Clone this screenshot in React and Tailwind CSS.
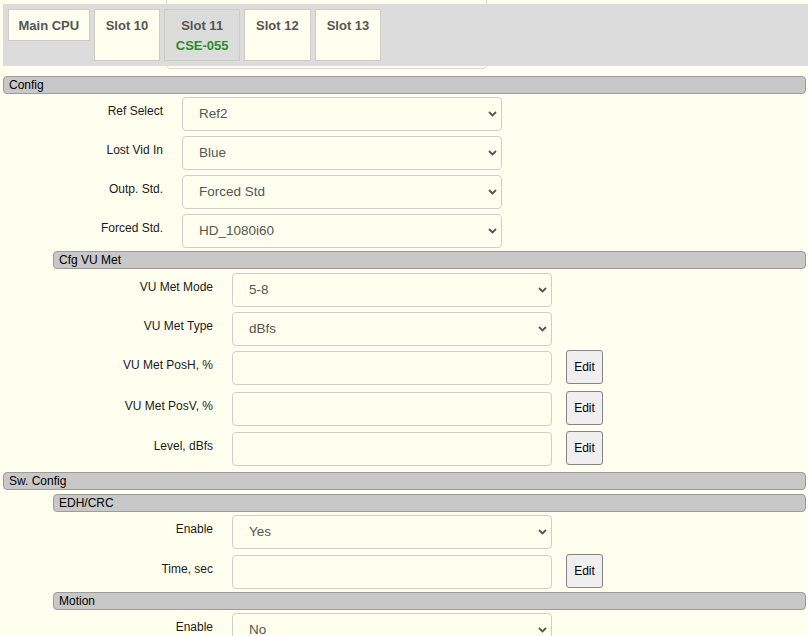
import React from "react";

const Chevron = () => (
  <svg className="pointer-events-none absolute right-[5px] top-1/2 -translate-y-1/2" width="9" height="6" viewBox="0 0 9 6">
    <path d="M1 1 L4.5 4.5 L8 1" fill="none" stroke="#555" strokeWidth="1.8" />
  </svg>
);

function Select({ value }) {
  return (
    <div className="relative w-[320px] h-[34px]">
      <select
        defaultValue={value}
        className="appearance-none w-full h-full rounded-[4px] border border-[#cfcfc8] bg-[#fffff0] pl-[16px] text-[13.5px] text-[#555] outline-none font-['Liberation_Sans',Arial,sans-serif]"
      >
        <option>{value}</option>
      </select>
      <Chevron />
    </div>
  );
}

function Input() {
  return (
    <div className="flex items-start gap-[14px]">
      <input className="w-[320px] h-[34px] rounded-[4px] border border-[#cfcfc8] bg-[#fffff0] outline-none" />
      <button className="mt-[-1px] w-[37px] h-[34px] rounded-[3px] border border-[#858585] bg-[#efefef] text-[12px] text-black">
        Edit
      </button>
    </div>
  );
}

function Row({ label, labelW, children, h = "h-[34px]" }) {
  return (
    <div className={`flex items-start ${h}`}>
      <div className={`${labelW} shrink-0 pr-[19px] pt-[7px] text-right text-[12px] leading-[15px] text-[#1a1a1a]`}>{label}</div>
      {children}
    </div>
  );
}

function Header({ children }) {
  return (
    <div className="h-[18px] rounded-[4px] border border-[#9c9c9c] bg-[#c8c8c8] pl-[5px] text-[12px] leading-[16px] text-black">
      {children}
    </div>
  );
}

function Tab({ title, sub, active, single, px = "px-[11px]" }) {
  return (
    <div
      className={`border border-[#cdcdc8] ${px} pt-[6px] ${single ? "pb-[4px]" : "pb-[4px] h-[52px]"} text-center text-[13px] font-bold leading-[20px] text-[#555] ${active ? "bg-[#dcdcdc]" : "bg-[#fffff0]"}`}
    >
      <div>{title}</div>
      {sub && <div className="text-[#2a8c2a]">{sub}</div>}
    </div>
  );
}

export default function App() {
  const L1 = "w-[182px]";
  const L2 = "w-[182px]";
  return (
    <div className="relative min-h-[636px] w-[808px] overflow-hidden bg-[#fffff0] font-['Liberation_Sans',Arial,sans-serif]">
      <div className="absolute left-[166px] top-[-10px] h-[79px] w-[321px] rounded-b-[4px] border border-[#d9d9d2]" />
      <div className="relative pt-[4px] pl-[3px]">
        <div className="flex items-start gap-[4px] bg-[#dcdcdc] pl-[5px] pt-[5px] pb-[6px] h-[62px]">
          <Tab title="Main CPU" single px="px-[9.5px]" />
          <Tab title="Slot 10" />
          <Tab title="Slot 11" sub="CSE-055" active px="px-[10.5px]" />
          <Tab title="Slot 12" />
          <Tab title="Slot 13" />
        </div>
      </div>

      <div className="relative mt-[10px] ml-[3px] mr-[2px]">
        <Header>Config</Header>
        <div className="flex flex-col gap-[5px] pt-[3px] pb-[3px] ml-[-3px]">
          <Row label="Ref Select" labelW={L1}><Select value="Ref2" /></Row>
          <Row label="Lost Vid In" labelW={L1}><Select value="Blue" /></Row>
          <Row label="Outp. Std." labelW={L1}><Select value="Forced Std" /></Row>
          <Row label="Forced Std." labelW={L1}><Select value="HD_1080i60" /></Row>
        </div>

        <div className="ml-[50px]">
          <Header>Cfg VU Met</Header>
          <div className="flex flex-col gap-[5px] pt-[4px] pb-[6px] ml-[-53px] pl-[50px]">
            <Row label="VU Met Mode" labelW={L2}><Select value="5-8" /></Row>
            <Row label="VU Met Type" labelW={L2}><Select value="dBfs" /></Row>
            <Row label="VU Met PosH, %" labelW={L2} h="h-[36px]"><Input /></Row>
            <Row label="VU Met PosV, %" labelW={L2} h="h-[35px]"><Input /></Row>
            <Row label="Level, dBfs" labelW={L2}><Input /></Row>
          </div>
        </div>

        <Header>Sw. Config</Header>
        <div className="ml-[50px] mt-[4px]">
          <Header>EDH/CRC</Header>
          <div className="flex flex-col gap-[6px] pt-[3px] pb-[3px] ml-[-53px] pl-[50px]">
            <Row label="Enable" labelW={L2}><Select value="Yes" /></Row>
            <Row label="Time, sec" labelW={L2}><Input /></Row>
          </div>
          <Header>Motion</Header>
          <div className="flex flex-col gap-[6px] pt-[3px] ml-[-53px] pl-[50px]">
            <Row label="Enable" labelW={L2}><Select value="No" /></Row>
          </div>
        </div>
      </div>
    </div>
  );
}
